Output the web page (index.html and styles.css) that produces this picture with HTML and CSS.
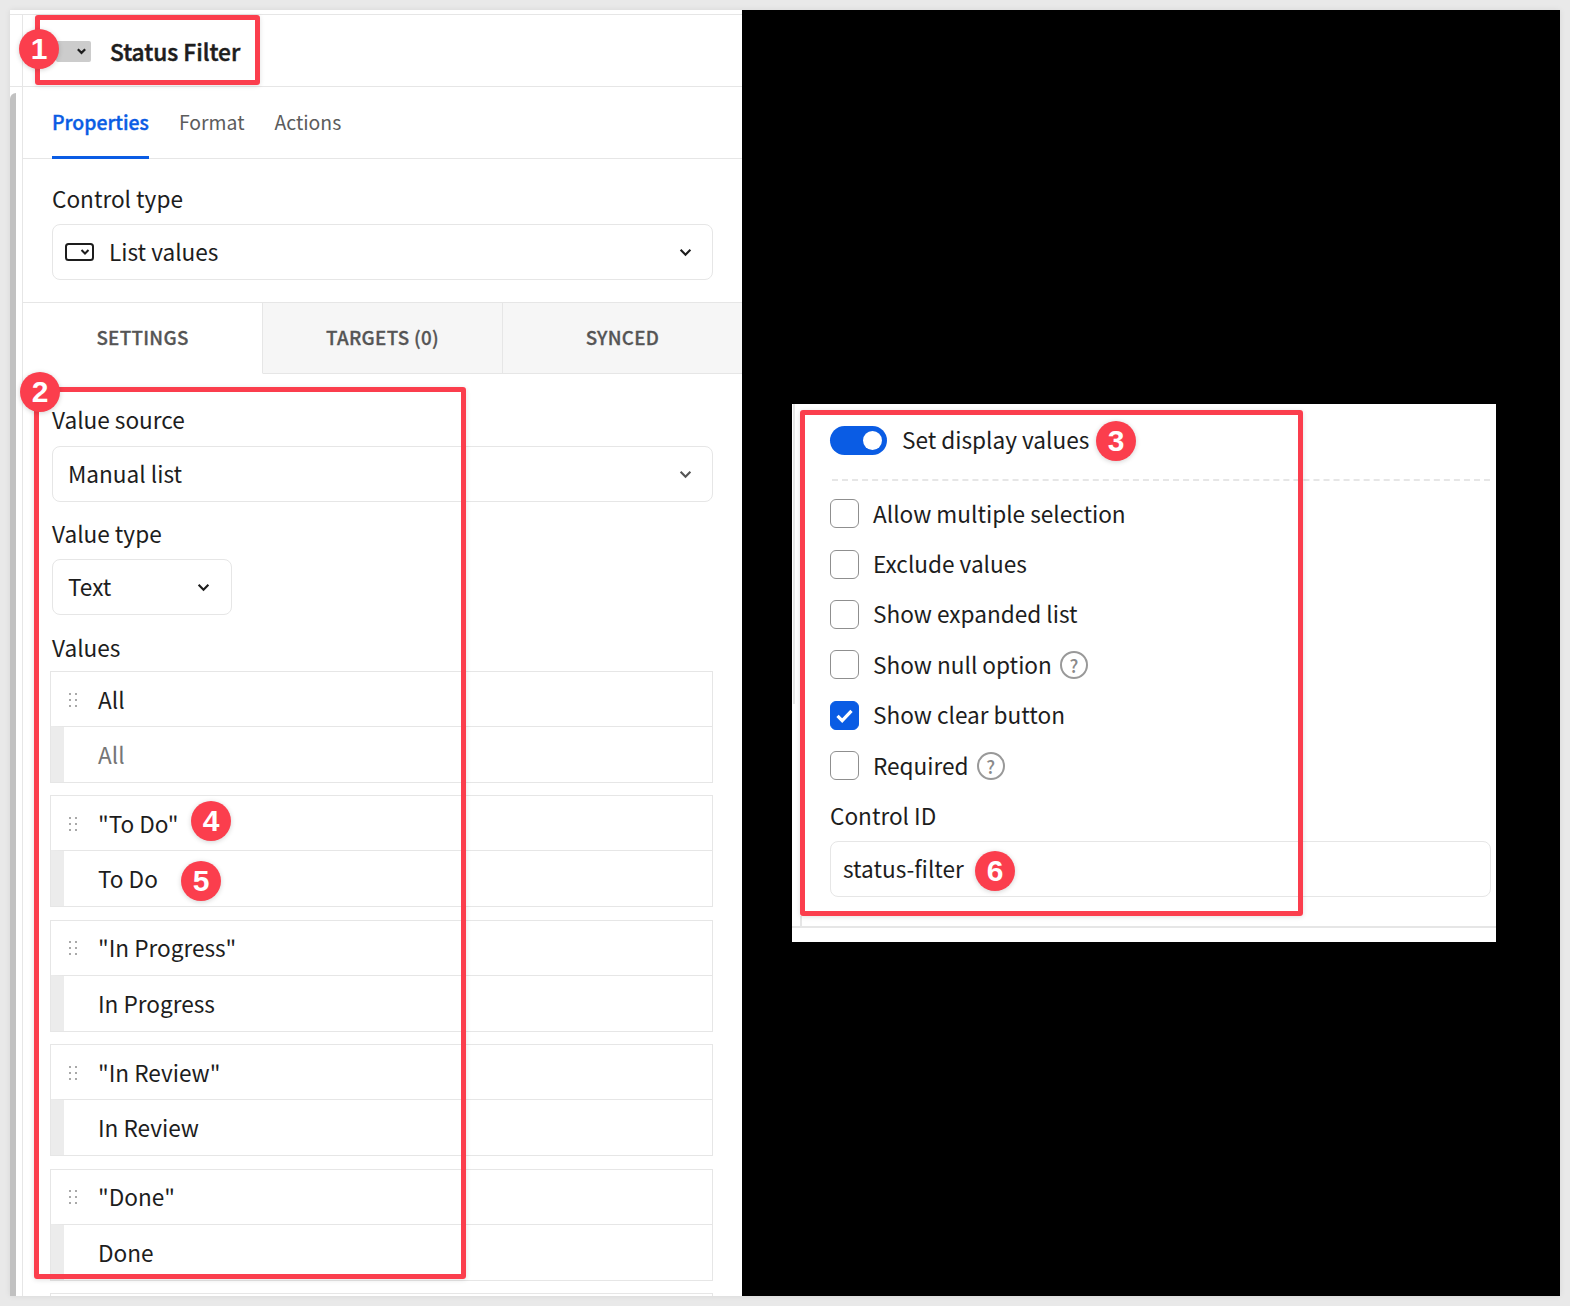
FILE: index.html
```html
<!DOCTYPE html>
<html lang="en">
<head>
<meta charset="utf-8">
<title>Status Filter control settings</title>
<link rel="stylesheet" href="styles.css">
</head>
<body>
<main class="frame">
  <section class="panel">
    <header class="head">
      <span class="chip"><svg class="chev-s" viewBox="0 0 12 8"><path d="M2 2l4 4 4-4"/></svg></span>
      <h1 class="title">Status Filter</h1>
    </header>
    <div class="panel-body">
      <div class="rail"><div class="scroll"></div></div>
      <div class="main">
        <nav class="tabs">
          <span class="tab active">Properties</span>
          <span class="tab">Format</span>
          <span class="tab">Actions</span>
        </nav>
        <div class="section control-type">
          <div class="label">Control type</div>
          <div class="select">
            <svg class="list-icon" viewBox="0 0 30 20"><rect x="1" y="2" width="27" height="16" rx="2.5"/><path d="M16.500 8l3.500 3.500L23.500 8"/></svg>
            <span class="value">List values</span>
            <svg class="chev" viewBox="0 0 12 8"><path d="M1.500 1.500L6 6l4.500-4.500"/></svg>
          </div>
        </div>
        <div class="subtabs">
          <span class="subtab on">SETTINGS</span>
          <span class="subtab">TARGETS (0)</span>
          <span class="subtab">SYNCED</span>
        </div>
        <div class="section settings">
          <div class="label">Value source</div>
          <div class="select pad first">
            <span class="value">Manual list</span>
            <svg class="chev light" viewBox="0 0 12 8"><path d="M1.500 1.500L6 6l4.500-4.500"/></svg>
          </div>
          <div class="label gap">Value type</div>
          <div class="select pad narrow">
            <span class="value">Text</span>
            <svg class="chev" viewBox="0 0 12 8"><path d="M1.500 1.500L6 6l4.500-4.500"/></svg>
          </div>
          <div class="label gap values">Values</div>
          <div class="items">
            <div class="item">
              <div class="row"><svg class="grip" viewBox="0 0 8 16"><g><circle cx="1" cy="2" r="1"/><circle cx="7" cy="2" r="1"/><circle cx="1" cy="8" r="1"/><circle cx="7" cy="8" r="1"/><circle cx="1" cy="14" r="1"/><circle cx="7" cy="14" r="1"/></g></svg><span>All</span></div>
              <div class="row sub"><span class="muted">All</span></div>
            </div>
            <div class="item">
              <div class="row"><svg class="grip" viewBox="0 0 8 16"><g><circle cx="1" cy="2" r="1"/><circle cx="7" cy="2" r="1"/><circle cx="1" cy="8" r="1"/><circle cx="7" cy="8" r="1"/><circle cx="1" cy="14" r="1"/><circle cx="7" cy="14" r="1"/></g></svg><span>"To Do"</span></div>
              <div class="row sub"><span>To Do</span></div>
            </div>
            <div class="item">
              <div class="row"><svg class="grip" viewBox="0 0 8 16"><g><circle cx="1" cy="2" r="1"/><circle cx="7" cy="2" r="1"/><circle cx="1" cy="8" r="1"/><circle cx="7" cy="8" r="1"/><circle cx="1" cy="14" r="1"/><circle cx="7" cy="14" r="1"/></g></svg><span>"In Progress"</span></div>
              <div class="row sub"><span>In Progress</span></div>
            </div>
            <div class="item">
              <div class="row"><svg class="grip" viewBox="0 0 8 16"><g><circle cx="1" cy="2" r="1"/><circle cx="7" cy="2" r="1"/><circle cx="1" cy="8" r="1"/><circle cx="7" cy="8" r="1"/><circle cx="1" cy="14" r="1"/><circle cx="7" cy="14" r="1"/></g></svg><span>"In Review"</span></div>
              <div class="row sub"><span>In Review</span></div>
            </div>
            <div class="item">
              <div class="row"><svg class="grip" viewBox="0 0 8 16"><g><circle cx="1" cy="2" r="1"/><circle cx="7" cy="2" r="1"/><circle cx="1" cy="8" r="1"/><circle cx="7" cy="8" r="1"/><circle cx="1" cy="14" r="1"/><circle cx="7" cy="14" r="1"/></g></svg><span>"Done"</span></div>
              <div class="row sub"><span>Done</span></div>
            </div>
            <div class="item"></div>
          </div>
        </div>
      </div>
    </div>
  </section>

  <section class="card">
    <div class="toggle-row">
      <span class="toggle"><span class="knob"></span></span>
      <span>Set display values</span>
    </div>
    <div class="dashed"></div>
    <div class="check-row"><span class="box"></span><span>Allow multiple selection</span></div>
    <div class="check-row"><span class="box"></span><span>Exclude values</span></div>
    <div class="check-row"><span class="box"></span><span>Show expanded list</span></div>
    <div class="check-row"><span class="box"></span><span>Show null option</span><span class="help">?</span></div>
    <div class="check-row"><span class="box checked"><svg viewBox="0 0 29 29"><path d="M7 15l5 5L22 9.500"/></svg></span><span>Show clear button</span></div>
    <div class="check-row"><span class="box"></span><span>Required</span><span class="help">?</span></div>
    <div class="label id-label">Control ID</div>
    <div class="select id-input"><span class="value">status-filter</span></div>
    <div class="card-foot"></div>
  </section>
</main>

<div class="mark m1"></div>
<div class="mark m2"></div>
<div class="mark m3"></div>
<span class="badge b1">1</span>
<span class="badge b2">2</span>
<span class="badge b3">3</span>
<span class="badge b4">4</span>
<span class="badge b5">5</span>
<span class="badge b6">6</span>
</body>
</html>
```
FILE: styles.css
```css
* { box-sizing: border-box; }
html, body { margin: 0; height: 1306px; overflow: hidden; }
body {
  background: #e9e9e9;
  padding: 10px 0 0 10px;
  position: relative;
  font-family: "Noto Sans CJK SC", "Noto Sans", sans-serif;
  font-size: 22.600px;
  line-height: 30px;
  color: #1d1d1d;
}
.frame {
  width: 1550px;
  height: 1286px;
  background: #000;
  display: flex;
  align-items: flex-start;
  overflow: hidden;
  box-shadow: 0 0 6px rgba(0,0,0,.08);
}

/* left panel */
.panel { width: 732px; height: 1286px; background: #fff; flex: none; overflow: hidden; padding-top: 4px; }
.head {
  height: 73px;
  margin-top: 0;
  border-top: 1px solid #e6e6e6;
  border-bottom: 1px solid #e6e6e6;
  padding: 0 0 0 46px;
  display: flex;
  align-items: center;
  position: relative;
}
.head::before { content: ""; position: absolute; left: 12px; top: 0; bottom: 0; width: 1px; background: #e6e6e6; }
.chip {
  width: 35px; height: 21px; background: #cccccc; border-radius: 2px;
  display: flex; align-items: center; justify-content: flex-end; padding-right: 4px;
  margin-top: 1px;
}
.chev-s { width: 11px; height: 8px; fill: none; stroke: #1d1d1d; stroke-width: 2.400; }
.title { margin: 3px 0 0 19px; font-size: 22.700px; font-weight: 500; line-height: 30px; color: #1d1d1d; -webkit-text-stroke: .5px #1d1d1d; }
.panel-body { display: flex; height: 1209px; }
.rail { width: 13px; flex: none; border-right: 1px solid #e6e6e6; padding-top: 6px; }
.scroll { width: 6px; height: 100%; background: #c1c1c1; border-radius: 6px 0 0 0; }
.main { flex: 1; min-width: 0; }
.tabs { height: 72px; display: flex; gap: 30px; padding-left: 29px; border-bottom: 1px solid #e6e6e6; font-size: 19.400px; }
.tab { height: 72px; line-height: 70px; color: #5c5c5c; }
.tab.active { color: #0a5ce4; font-weight: 500; -webkit-text-stroke: .4px #0a5ce4; border-bottom: 3px solid #0a5ce4; }
.section { padding: 0 29px; }
.control-type { height: 144px; padding-top: 25px; border-bottom: 1px solid #e6e6e6; }
.label { height: 30px; }
.gap { margin-top: 17px; }
.gap.values { margin-top: 18px; }
.select {
  height: 56px; margin-top: 10px; border: 1px solid #e6e6e6; border-radius: 8px;
  display: flex; align-items: center; padding: 0 20px 0 12px;
}
.select.first { margin-top: 11px; }
.select.pad { padding-left: 15px; }
.select.narrow { width: 180px; padding-right: 21px; }
.value { flex: 1; }
.list-icon { width: 30px; height: 20px; margin-right: 14px; fill: none; stroke: #1d1d1d; stroke-width: 2; }
.chev { width: 13px; height: 9px; fill: none; stroke: #1d1d1d; stroke-width: 2; }
.chev.light { stroke: #555; }
.subtabs { height: 71px; display: flex; }
.subtab {
  flex: 1; background: #f6f6f6; border-bottom: 1px solid #e6e6e6; border-right: 1px solid #e6e6e6;
  display: flex; align-items: center; justify-content: center; padding-bottom: 3px;
  font-size: 18.800px; font-weight: 500; color: #555; letter-spacing: .3px; -webkit-text-stroke: .3px #555;
}
.subtab:last-child { border-right: 0; }
.subtab.on { background: #fff; border-bottom-color: #fff; }
.settings { padding-top: 31px; }
.items { margin: 8px 0 0 -2px; }
.item { height: 112px; margin-bottom: 12.400px; border: 1px solid #e6e6e6; }
.row { height: 54px; display: flex; align-items: center; padding: 1px 0 0 18px; }
.row.sub { height: 56px; border-top: 1px solid #e6e6e6; border-left: 13px solid #ececec; padding-left: 34px; }
.grip { width: 8px; height: 16px; margin-right: 21px; fill: #8c8c8c; }
.muted { color: #767676; }

/* right card */
.card {
  width: 704px; height: 538px; margin: 394px 0 0 50px; background: #fff; flex: none;
  position: relative; padding: 21px 0 0 38px; overflow: hidden;
}
.card::before { content: ""; position: absolute; left: 1px; top: 0; height: 300px; width: 2px; background: #e6e6e6; }
.toggle-row { display: flex; align-items: center; gap: 15px; height: 30px; }
.toggle { width: 57px; height: 29px; border-radius: 15px; background: #0a5ce4; position: relative; flex: none; }
.knob { position: absolute; right: 5px; top: 5px; width: 19px; height: 19px; border-radius: 50%; background: #fff; }
.dashed { height: 0; margin: 24px 6px 7.500px 2px; border-top: 2px dashed #e6e6e6; }
.check-row { height: 50.400px; display: flex; align-items: center; }
.box { width: 29px; height: 29px; margin-right: 14px; flex: none; border: 1px solid #8f8f8f; border-radius: 6px; }
.box.checked { background: #0a5ce4; border-color: #0a5ce4; }
.box.checked svg { display: block; width: 27px; height: 27px; fill: none; stroke: #fff; stroke-width: 3.500; }
.help {
  width: 28px; height: 28px; margin-left: 8px; border: 2px solid #999; border-radius: 50%;
  display: flex; align-items: center; justify-content: center; font-size: 18px; font-weight: 500; line-height: 24px; color: #8a8a8a;
}
.id-label { margin-top: 10px; }
.id-input { width: 661px; padding: 1px 0 0 12px; margin-top: 10px; }
.card-foot { position: absolute; left: 0; right: 0; top: 522px; border-top: 2px solid #e6e6e6; }
.card-foot::before { content: ""; position: absolute; left: 8px; top: -12px; height: 12px; border-left: 2px solid #e6e6e6; }

/* annotations */
.mark { position: absolute; border: 5.500px solid #fb3e4d; border-radius: 3px; box-shadow: 0 1px 5px rgba(0,0,0,.12); pointer-events: none; }
.m1 { left: 35px; top: 15px; width: 225px; height: 70px; }
.m2 { left: 34px; top: 387px; width: 432px; height: 892px; }
.m3 { left: 800px; top: 410px; width: 503px; height: 506px; }
.badge {
  position: absolute; width: 40px; height: 40px; border-radius: 50%; background: #fb3e4d; color: #fff;
  display: flex; align-items: center; justify-content: center;
  font-family: "Liberation Sans", Arial, sans-serif; font-weight: 700; font-size: 30px; line-height: 40px;
  box-shadow: 0 1px 5px rgba(0,0,0,.18);
}
.b1 { left: 19px; top: 29px; }
.b2 { left: 20px; top: 372px; }
.b3 { left: 1096px; top: 421px; }
.b4 { left: 191px; top: 801px; }
.b5 { left: 181px; top: 861px; }
.b6 { left: 975px; top: 851px; }
```
